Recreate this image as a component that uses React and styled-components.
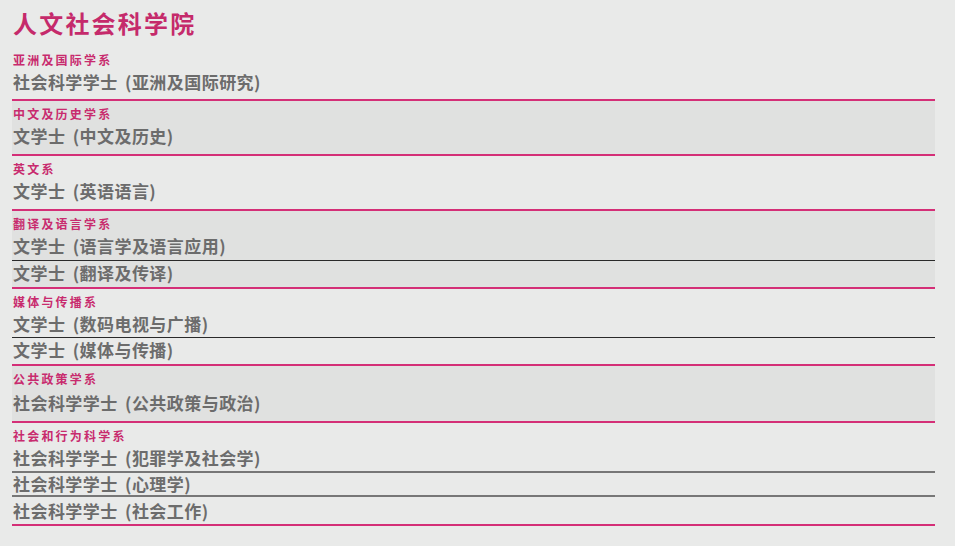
import React from "react";
import styled, { createGlobalStyle } from "styled-components";

const Global = createGlobalStyle`
  html, body { margin: 0; padding: 0; background: #e9eae9; }
  body { font-family: "Noto Sans CJK SC", "Noto Sans", sans-serif; }
`;

const Page = styled.div`
  width: 923px;
  padding: 8px 0 20px 12px;
`;

const Title = styled.h1`
  margin: 0 0 13px 1px;
  font-size: 24px;
  line-height: 30px;
  font-weight: 700;
  letter-spacing: 2.2px;
  color: #c52a6b;
`;

const Group = styled.section`
  background: ${(p) => (p.$shaded ? "#e0e1e0" : "transparent")};
  border-bottom: 2px solid #d42f77;
  padding-top: ${(p) => (p.$first ? 0 : 4)}px;
`;

const Dept = styled.div`
  padding: 0 0 2px 1px;
  font-size: 12px;
  line-height: 18px;
  font-weight: 700;
  letter-spacing: 2.2px;
  color: #c82b6e;
`;

const rules = {
  dark: "1px solid #2a2a2a",
  gray: "2px solid #777777",
};

const Degree = styled.div`
  padding: ${(p) => p.$pad};
  padding-left: 1px;
  font-size: 17px;
  line-height: 22px;
  font-weight: 700;
  letter-spacing: 0.45px;
  word-spacing: 3px;
  color: #6c6c6c;
  border-bottom: ${(p) => rules[p.$rule] || "none"};
`;

const data = [
  { dept: "亚洲及国际学系", degrees: ["社会科学学士 (亚洲及国际研究)"], pads: ["0 0 6px"] },
  { dept: "中文及历史学系", degrees: ["文学士 (中文及历史)"], shaded: true, pads: ["0 0 7px"] },
  { dept: "英文系", degrees: ["文学士 (英语语言)"], pads: ["0 0 7px"] },
  {
    dept: "翻译及语言学系",
    degrees: ["文学士 (语言学及语言应用)", "文学士 (翻译及传译)"],
    shaded: true,
    rule: "dark",
    pads: ["0 0 3px", "1px 0 3px"],
  },
  {
    dept: "媒体与传播系",
    degrees: ["文学士 (数码电视与广播)", "文学士 (媒体与传播)"],
    rule: "dark",
    pads: ["0 0 2px", "1px 0 3px"],
  },
  {
    dept: "公共政策学系",
    degrees: ["社会科学学士 (公共政策与政治)"],
    shaded: true,
    pads: ["2px 0 7px"],
  },
  {
    dept: "社会和行为科学系",
    degrees: ["社会科学学士 (犯罪学及社会学)", "社会科学学士 (心理学)", "社会科学学士 (社会工作)"],
    rule: "gray",
    pads: ["0 0 2px", "0", "3px 0 2px"],
  },
];

export default function App() {
  return (
    <>
      <Global />
      <Page>
        <Title>人文社会科学院</Title>
        {data.map((g, i) => (
          <Group key={g.dept} $shaded={g.shaded} $first={i === 0}>
            <Dept>{g.dept}</Dept>
            {g.degrees.map((d, j) => (
              <Degree
                key={d}
                $pad={g.pads[j]}
                $rule={j < g.degrees.length - 1 ? g.rule : undefined}
              >
                {d}
              </Degree>
            ))}
          </Group>
        ))}
      </Page>
    </>
  );
}
